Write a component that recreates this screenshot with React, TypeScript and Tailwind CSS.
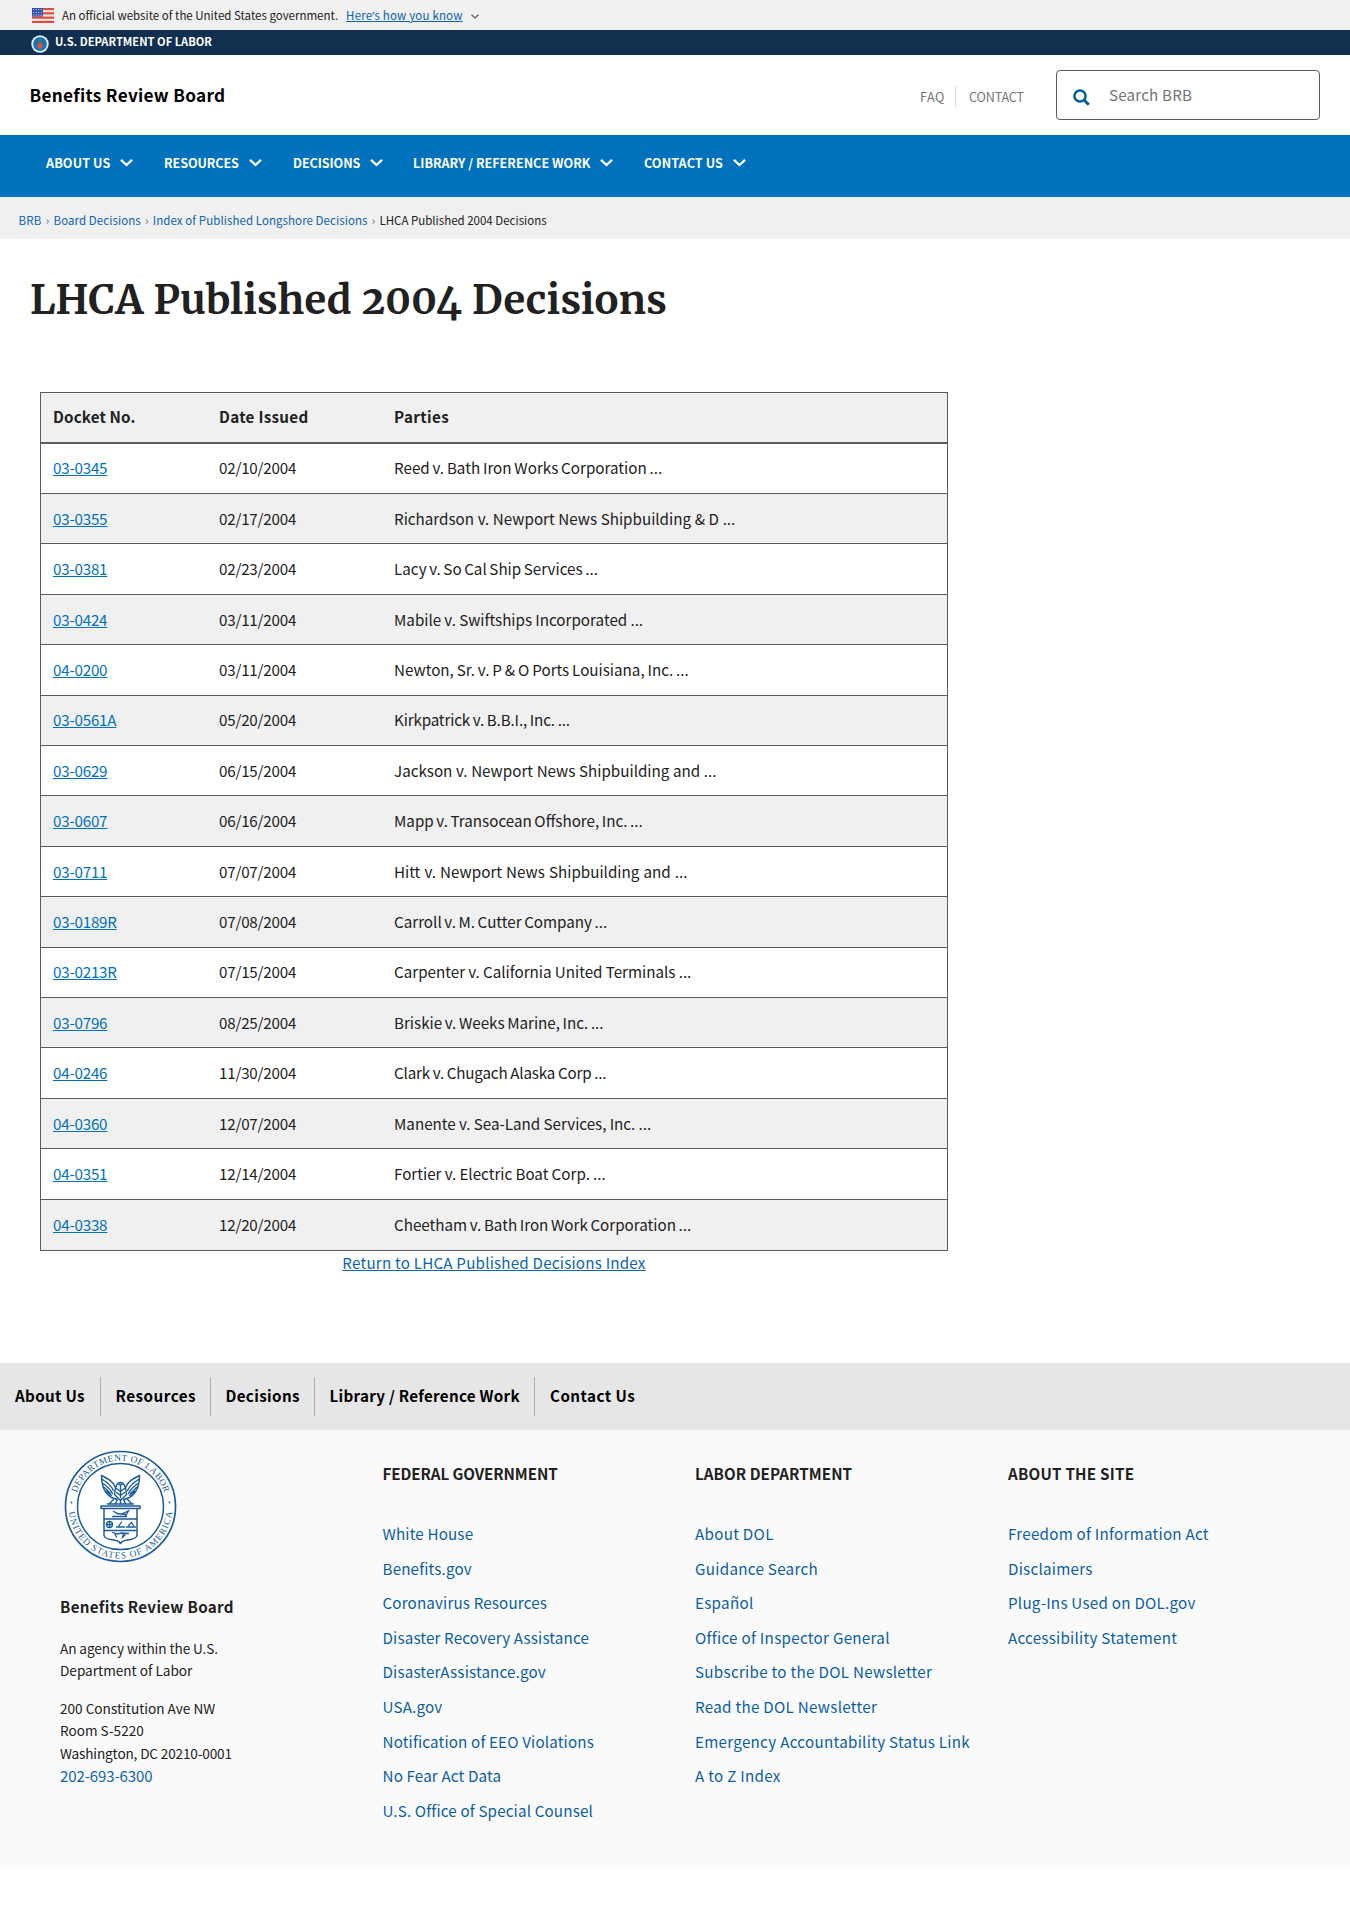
const primaryMenu = [
  { label: "ABOUT US", width: "w-[118px]", spacing: "tracking-[0.1px]" },
  { label: "RESOURCES", width: "w-[129px]", spacing: "tracking-[-0.1px]" },
  { label: "DECISIONS", width: "w-[120px]", spacing: "tracking-[-0.1px]" },
  { label: "LIBRARY / REFERENCE WORK", width: "w-[231px]", spacing: "" },
  { label: "CONTACT US", width: "w-[110px]", spacing: "tracking-[0.1px]" },
];

const crumbs = [
  { label: "BRB", spacing: "tracking-[0.2px]" },
  { label: "Board Decisions", spacing: "tracking-[0.08px]" },
  { label: "Index of Published Longshore Decisions", spacing: "tracking-[0.07px]" },
];

const decisions: [string, string, string, string][] = [
  ["03-0345", "02/10/2004", "Reed v. Bath Iron Works Corporation ...", "[word-spacing:-0.6px]"],
  ["03-0355", "02/17/2004", "Richardson v. Newport News Shipbuilding & D ...", "[word-spacing:0.2px]"],
  ["03-0381", "02/23/2004", "Lacy v. So Cal Ship Services ...", "[word-spacing:-0.8px]"],
  ["03-0424", "03/11/2004", "Mabile v. Swiftships Incorporated ...", "[word-spacing:-0.2px]"],
  ["04-0200", "03/11/2004", "Newton, Sr. v. P & O Ports Louisiana, Inc. ...", "[word-spacing:-0.5px]"],
  ["03-0561A", "05/20/2004", "Kirkpatrick v. B.B.I., Inc. ...", "tracking-[-0.15px] [word-spacing:-0.5px]"],
  ["03-0629", "06/15/2004", "Jackson v. Newport News Shipbuilding and ...", "[word-spacing:0.2px]"],
  ["03-0607", "06/16/2004", "Mapp v. Transocean Offshore, Inc. ...", "[word-spacing:-0.8px]"],
  ["03-0711", "07/07/2004", "Hitt v. Newport News Shipbuilding and ...", "[word-spacing:0.7px]"],
  ["03-0189R", "07/08/2004", "Carroll v. M. Cutter Company ...", "[word-spacing:-0.8px]"],
  ["03-0213R", "07/15/2004", "Carpenter v. California United Terminals ...", "[word-spacing:-0.2px]"],
  ["03-0796", "08/25/2004", "Briskie v. Weeks Marine, Inc. ...", "[word-spacing:-0.8px]"],
  ["04-0246", "11/30/2004", "Clark v. Chugach Alaska Corp ...", "tracking-[-0.15px] [word-spacing:-0.6px]"],
  ["04-0360", "12/07/2004", "Manente v. Sea-Land Services, Inc. ...", "[word-spacing:-0.2px]"],
  ["04-0351", "12/14/2004", "Fortier v. Electric Boat Corp. ...", "[word-spacing:-0.2px]"],
  ["04-0338", "12/20/2004", "Cheetham v. Bath Iron Work Corporation ...", "[word-spacing:-0.8px]"],
];

const footerMenu = [
  { label: "About Us", box: "w-[101px] pl-[15px] border-r tracking-[0.33px]" },
  { label: "Resources", box: "w-[110px] pl-[14.5px] border-r tracking-[0.5px]" },
  { label: "Decisions", box: "w-[104px] pl-[14.5px] border-r tracking-[0.35px]" },
  { label: "Library / Reference Work", box: "w-[220px] pl-[14.5px] border-r tracking-[0.27px]" },
  { label: "Contact Us", box: "pl-[15px] tracking-[0.45px]" },
];

const footerColumns = [
  {
    title: "FEDERAL GOVERNMENT",
    spacing: "tracking-[-0.08px]",
    linkSpacing: "tracking-[0.15px]",
    links: [
      "White House",
      "Benefits.gov",
      "Coronavirus Resources",
      "Disaster Recovery Assistance",
      "DisasterAssistance.gov",
      "USA.gov",
      "Notification of EEO Violations",
      "No Fear Act Data",
      "U.S. Office of Special Counsel",
    ],
  },
  {
    title: "LABOR DEPARTMENT",
    spacing: "tracking-[0.06px]",
    linkSpacing: "tracking-[0.28px]",
    links: [
      "About DOL",
      "Guidance Search",
      "Español",
      "Office of Inspector General",
      "Subscribe to the DOL Newsletter",
      "Read the DOL Newsletter",
      "Emergency Accountability Status Link",
      "A to Z Index",
    ],
  },
  {
    title: "ABOUT THE SITE",
    spacing: "tracking-[0.22px]",
    linkSpacing: "tracking-[0.24px]",
    links: ["Freedom of Information Act", "Disclaimers", "Plug-Ins Used on DOL.gov", "Accessibility Statement"],
  },
];

function Flag() {
  return (
    <svg width="22" height="15" viewBox="0 0 22 15" className="mt-px shrink-0">
      <rect width="22" height="15" fill="#fbe9e7" />
      {[0, 4.3, 8.6, 12.9].map((y) => (
        <rect key={y} y={y} width="22" height="2.1" fill="#e0483b" />
      ))}
      <rect width="11" height="8.6" fill="#2f4bab" />
      {[1.6, 4.3, 7].map((y) =>
        [1.8, 4.3, 6.8, 9.2].map((x) => <circle key={`${x}-${y}`} cx={x} cy={y} r="0.65" fill="#dfe6fa" />),
      )}
    </svg>
  );
}

function MiniSeal() {
  return (
    <svg width="18" height="18" viewBox="0 0 18 18" className="shrink-0">
      <circle cx="9" cy="9" r="8.7" fill="#e8f1f5" />
      <circle cx="9" cy="9" r="6.9" fill="#1578bd" />
      <path d="M6 4.6 8.2 7h1.6L12 4.6v3.8H6Z" fill="#6a5a4c" />
      <path d="M9 3.8v3.6" stroke="#3d8f6b" strokeWidth="1.2" />
      <path d="M6.8 8.6h4.4v4.2L9 14l-2.2-1.2Z" fill="#e8502a" />
    </svg>
  );
}

function Chevron({ className, width, height, weight }: { className: string; width: number; height: number; weight: number }) {
  return (
    <svg width={width} height={height} viewBox="0 0 12 7" className={className} fill="none" stroke="currentColor" strokeWidth={weight}>
      <path d="M0.8 0.9 6 5.6 11.2 0.9" />
    </svg>
  );
}

function SearchIcon() {
  return (
    <svg width="17" height="17" viewBox="0 0 17 17" fill="none" stroke="#005ea2" className="shrink-0">
      <circle cx="7" cy="7" r="5.6" strokeWidth="2.5" />
      <path d="m11 11 4.8 4.8" strokeWidth="3" />
    </svg>
  );
}

function Seal() {
  return (
    <svg width="113" height="113" viewBox="-56.5 -56.5 113 113" fill="none" stroke="#1c5b99" className="block">
      <defs>
        <path id="seal-top" d="M-45.8 0A45.8 45.8 0 0 1 45.8 0" />
        <path id="seal-bottom" d="M-52 0A52 52 0 0 0 52 0" />
      </defs>
      <circle r="55" strokeWidth="1.7" fill="#fff" />
      <circle r="43" strokeWidth="1.5" />
      <g fill="#1c5b99" stroke="none" className="font-['Liberation_Serif',serif] text-[9.2px]">
        <text textAnchor="middle">
          <textPath href="#seal-top" startOffset="50%" textLength="116">
            DEPARTMENT OF LABOR
          </textPath>
        </text>
        <text textAnchor="middle">
          <textPath href="#seal-bottom" startOffset="50%" textLength="152">
            UNITED STATES OF AMERICA
          </textPath>
        </text>
        <circle cx="-49" cy="-4" r="0.9" />
        <circle cx="49" cy="-4" r="0.9" />
      </g>
      <g strokeWidth="1.4" strokeLinejoin="round" strokeLinecap="round">
        <path d="M-19-31C-19-22-16-13-9-9M19-31C19-22 16-13 9-9" />
        <path d="M-19-31C-13-28-7-25-5-19M19-31C13-28 7-25 5-19" />
        <path d="M-18-27C-13-24-9-20-7-16M18-27C13-24 9-20 7-16M-17.5-23C-13-20-10-17-8-13M17.5-23C13-20 10-17 8-13M-16-19-10-13M16-19 10-13M-14-15-9-11M14-15 9-11" />
        <path d="M-5-19C-3-22-4-24 0-24 4-24 3-22 5-19L6-12 0-6-6-12Z" />
        <path d="M-4-18 0-15 4-18M-4-14 0-11 4-14M0-21v12M-1.5-22h3" />
        <path d="M-9-9-3-7-5-3M9-9 3-7 5-3M-7-7-11-3M7-7 11-3M0-6v3M-13-2.5H13" />
      </g>
      <g strokeWidth="1.5" strokeLinejoin="round">
        <path d="M-19.5-.5H19.5V2H-19.5Z" />
        <path d="M-16.5 2V29Q-16 32.5-7 33.5-2 34 0 37 2 34 7 33.5 16 32.5 16.5 29V2" />
        <path d="M-16.5 12.5H16.5M-16.5 24H16.5" />
      </g>
      <g strokeWidth="1.3" strokeLinecap="round">
        <circle cx="-11" cy="18" r="3" />
        <path d="M-14 18h6M-11 15v6M-4 20.5h8M-2 20 1 15.5M6 20.5h9M8 19l3-3 2 3M-8 10h14M-7 5 0 8 8 4.5 5 9.500M-4 7l9 1M-8 26l5 1.5 4-1 7 .5M-6 26.5l2 4M3 27l-1 4 3-3" />
      </g>
    </svg>
  );
}

export default function App() {
  return (
    <div className="min-h-[1925px] bg-white font-['Noto_Sans_CJK_SC','Noto_Sans',sans-serif] text-[15.2px] text-[#212121]">
      <div className="flex h-[30px] items-start bg-[#f0f0f0] pl-8 pt-[7px] text-[11.5px] leading-4">
        <Flag />
        <span className="ml-2">An official website of the United States government.</span>
        <a className="ml-[8px] tracking-[0.18px] text-[#0b64ad] underline underline-offset-1">
          Here<span className="font-['Noto_Sans']">’</span>s how you know
        </a>
        <Chevron width={8} height={5} weight={2} className="ml-[8px] mt-[7px] text-[#565c65]" />
      </div>

      <div className="flex h-[25px] items-start bg-[#112f4e] pl-[31px] pt-[3px] text-[11.15px] font-bold leading-4 text-white">
        <div className="pt-[2px]">
          <MiniSeal />
        </div>
        <span className="ml-[6px]">U.S. DEPARTMENT OF LABOR</span>
      </div>

      <header className="flex h-20 items-start pl-[29.5px] pr-[30px] pt-[15px]">
        <h2 className="pt-[13px] text-[17.2px] font-bold leading-[24px] tracking-[0.3px] text-black">Benefits Review Board</h2>
        <div className="ml-auto flex pt-[16px] text-[12.6px] leading-[22px] text-[#757575]">
          <a className="w-[36px] border-r border-[#dcdee0] tracking-[0.5px]">FAQ</a>
          <a className="w-[100px] pl-[13px] tracking-[-0.15px]">CONTACT</a>
        </div>
        <div className="flex h-[50px] w-[264px] rounded border border-[#565c65] pl-4">
          <div className="pt-[18px]">
            <SearchIcon />
          </div>
          <span className="pl-[19px] pt-[11px] leading-[24px] tracking-[0.17px] text-[#757575]">Search BRB</span>
        </div>
      </header>

      <nav className="flex h-[62px] bg-[#0071bc] pl-[46px] pt-[19px] text-[12.6px] font-bold leading-[18px] text-white">
        {primaryMenu.map((item) => (
          <a key={item.label} className={`flex items-start ${item.width}`}>
            <span className={`whitespace-nowrap ${item.spacing}`}>{item.label}</span>
            <Chevron width={13} height={7.5} weight={2.2} className="ml-[10px] mt-[5px] shrink-0" />
          </a>
        ))}
      </nav>

      <div className="flex h-[42px] bg-[#f0f0f0] pl-[18.5px] pt-[15px] text-[11.5px] leading-4">
        {crumbs.map((crumb) => (
          <span key={crumb.label} className="flex">
            <a className={`text-[#0b64ad] ${crumb.spacing}`}>{crumb.label}</a>
            <span className="w-[12px] text-center text-[#565c65]">›</span>
          </span>
        ))}
        <span>LHCA Published 2004 Decisions</span>
      </div>

      <main className="h-[1124px] pl-[30px] pt-[36px]">
        <h1 className="font-['Merriweather','DejaVu_Serif_Condensed',serif] text-[40px] font-bold leading-[50px] tracking-[0.27px] oldstyle-nums">
          LHCA Published 2004 Decisions
        </h1>
        <div className="ml-[10px] mt-[67px] w-[908px]">
          <table className="block border border-[#5b5b5b]">
            <thead className="block">
              <tr className="grid h-[50.6px] grid-cols-[178px_175px_1fr] items-center border-b-2 border-[#5b5b5b] bg-[#f0f0f0] pb-[2px] text-left">
                <th className="pl-3 tracking-[0.14px]">Docket No.</th>
                <th className="tracking-[0.3px]">Date Issued</th>
                <th className="tracking-[0.4px]">Parties</th>
              </tr>
            </thead>
            <tbody className="block">
              {decisions.map(([docket, date, parties, wordGap]) => (
                <tr
                  key={docket}
                  className="grid h-[50.42px] grid-cols-[178px_175px_1fr] items-center border-b border-[#5b5b5b] pb-px last:border-b-0 even:bg-[#f0f0f0]"
                >
                  <td className="pl-3">
                    <a className="tracking-[-0.22px] text-[#0071bc] underline underline-offset-1">{docket}</a>
                  </td>
                  <td className="tracking-[-0.22px]">{date}</td>
                  <td className={wordGap}>{parties}</td>
                </tr>
              ))}
            </tbody>
          </table>
          <p className="-mt-px text-center leading-[24px] tracking-[0.2px]">
            <a className="text-[#0b64ad] underline underline-offset-1">Return to LHCA Published Decisions Index</a>
          </p>
        </div>
      </main>

      <footer>
        <nav className="flex h-[67px] bg-[#e6e6e6] pt-[14px] font-bold text-black">
          {footerMenu.map((item) => (
            <a key={item.label} className={`h-[39px] border-[#adadad] leading-[36px] ${item.box}`}>
              {item.label}
            </a>
          ))}
        </nav>
        <div className="grid h-[437px] grid-cols-[322.5px_312.5px_313px_1fr] bg-[#fafafa] pl-[60px]">
          <div className="pt-[20px] text-[13.6px]">
            <div className="ml-[3.5px]">
              <Seal />
            </div>
            <h3 className="mt-[31px] text-[15.2px] font-bold leading-[24px] tracking-[0.3px]">Benefits Review Board</h3>
            <p className="mt-[18.5px] leading-[22px]">
              <span className="tracking-[-0.08px]">An agency within the U.S.</span>
              <br />
              Department of Labor
            </p>
            <address className="mt-[16px] leading-[22.5px] not-italic">
              200 Constitution Ave NW
              <br />
              Room S-5220
              <br />
              <span className="tracking-[-0.15px]">Washington, DC 20210-0001</span>
            </address>
            <a className="block text-[15px] leading-[23px] tracking-[-0.1px] text-[#0b64ad]">202-693-6300</a>
          </div>
          {footerColumns.map((column) => (
            <div key={column.title} className="pt-[31px]">
              <h3 className={`font-bold leading-[24px] ${column.spacing}`}>{column.title}</h3>
              <ul className={`mt-[31px] leading-[34.6px] text-[#0b5ea3] ${column.linkSpacing}`}>
                {column.links.map((link) => (
                  <li key={link}>
                    <a>{link}</a>
                  </li>
                ))}
              </ul>
            </div>
          ))}
        </div>
      </footer>
    </div>
  );
}
